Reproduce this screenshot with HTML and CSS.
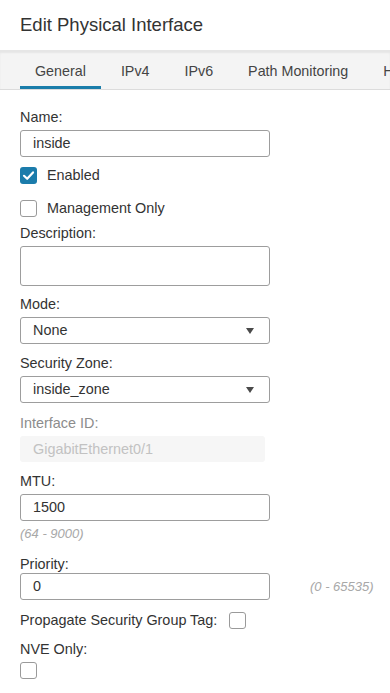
FILE: index.html
```html
<!DOCTYPE html>
<html lang="en">
<head>
<meta charset="utf-8">
<title>Edit Physical Interface</title>
<link rel="stylesheet" href="styles.css">
</head>
<body>
<div class="modal">
  <header class="header">
    <h1 class="title">Edit Physical Interface</h1>
  </header>
  <nav class="tabs">
    <div class="tab active">General</div>
    <div class="tab">IPv4</div>
    <div class="tab">IPv6</div>
    <div class="tab">Path Monitoring</div>
    <div class="tab">Hardware Configuration</div>
  </nav>
  <form class="form">
    <div class="field field-name">
      <label class="label">Name:</label>
      <div class="input">inside</div>
    </div>
    <div class="check-row row-enabled">
      <span class="cb checked">
        <svg viewBox="0 0 17 17" width="17" height="17"><path d="M4 8.8 L7.2 11.8 L13 5.4" fill="none" stroke="#fff" stroke-width="2.2" stroke-linecap="round" stroke-linejoin="round"/></svg>
      </span>
      <span class="check-text">Enabled</span>
    </div>
    <div class="check-row row-mgmt">
      <span class="cb"></span>
      <span class="check-text">Management Only</span>
    </div>
    <div class="field field-desc">
      <label class="label">Description:</label>
      <div class="input textarea"></div>
    </div>
    <div class="field field-mode">
      <label class="label">Mode:</label>
      <div class="input select"><span>None</span><span class="caret"></span></div>
    </div>
    <div class="field field-zone">
      <label class="label">Security Zone:</label>
      <div class="input select"><span>inside_zone</span><span class="caret"></span></div>
    </div>
    <div class="field field-iface">
      <label class="label label-muted">Interface ID:</label>
      <div class="input disabled">GigabitEthernet0/1</div>
    </div>
    <div class="field field-mtu">
      <label class="label">MTU:</label>
      <div class="input">1500</div>
      <div class="hint hint-below">(64 - 9000)</div>
    </div>
    <div class="field field-priority">
      <label class="label label-tight">Priority:</label>
      <div class="inline-row">
        <div class="input">0</div>
        <div class="hint">(0 - 65535)</div>
      </div>
    </div>
    <div class="check-row row-sgt">
      <span class="check-text-left">Propagate Security Group Tag:</span>
      <span class="cb"></span>
    </div>
    <div class="field field-nve">
      <label class="label">NVE Only:</label>
      <span class="cb"></span>
    </div>
  </form>
</div>
</body>
</html>
```
FILE: styles.css
```css
* { box-sizing: border-box; }

html, body {
  margin: 0;
  padding: 0;
  background: #ffffff;
}

body {
  font-family: "Liberation Sans", Arial, sans-serif;
  color: #333333;
  font-size: 14.4px;
  overflow: hidden;
}

.modal {
  width: 390px;
  height: 693px;
  overflow: hidden;
  background: #ffffff;
}

.header {
  height: 50px;
  padding: 1px 20px 0;
}

.title {
  margin: 0;
  font-weight: normal;
  font-size: 18.5px;
  line-height: 48px;
  color: #333333;
}

.tabs {
  display: flex;
  gap: 5px;
  height: 40px;
  padding-left: 20px;
  background: #f4f4f4;
  border-top: 1px solid #e6e6e6;
  border-bottom: 1px solid #dcdcdc;
  box-shadow: inset 0 2px 2px rgba(0, 0, 0, 0.06);
  white-space: nowrap;
  overflow: hidden;
}

.tab {
  flex: none;
  height: 39px;
  padding: 10px 15px 0;
  line-height: 20px;
  font-size: 14.3px;
  color: #444444;
  border-bottom: 4px solid transparent;
}

.tab.active {
  border-bottom-color: #1a7daa;
}

.form {
  padding: 18px 20px 0;
}

.label {
  display: block;
  line-height: 18px;
  margin-bottom: 4px;
  color: #333333;
}

.label-muted {
  color: #8c8c8c;
}

.label-tight {
  margin-bottom: 0;
}

.input {
  flex: none;
  width: 250px;
  height: 27px;
  border: 1px solid #9d9d9d;
  border-radius: 3px;
  padding: 0 12px;
  line-height: 25px;
  color: #333333;
  background: #ffffff;
}

.textarea {
  height: 40px;
}

.select {
  display: flex;
  align-items: center;
  justify-content: space-between;
  padding-right: 15px;
}

.caret {
  width: 0;
  height: 0;
  border-left: 4px solid transparent;
  border-right: 4px solid transparent;
  border-top: 6px solid #4a4a4a;
}

.disabled {
  width: 245px;
  height: 26px;
  border: none;
  background: #f6f6f6;
  color: #c2c2c2;
  padding-left: 13px;
  line-height: 26px;
}

.check-row {
  display: flex;
  align-items: center;
  height: 20px;
}

.cb {
  display: block;
  flex: none;
  width: 17px;
  height: 17px;
  border: 1px solid #9a9a9a;
  border-radius: 3px;
  background: #ffffff;
}

.cb.checked {
  border: none;
  background: #1b7cab;
}

.cb svg {
  display: block;
}

.check-text {
  margin-left: 10px;
  color: #333333;
}

.check-text-left {
  margin-right: 12px;
  color: #333333;
}

.row-enabled { margin-top: 8px; }
.row-mgmt { margin-top: 13px; }
.field-desc { margin-top: 6px; }
.field-mode { margin-top: 9px; }
.field-zone { margin-top: 10px; }
.field-iface { margin-top: 11px; }
.field-mtu { margin-top: 10px; }
.field-priority { margin-top: 14px; }
.row-sgt { margin-top: 10px; }
.field-nve { margin-top: 10px; }

.hint {
  font-size: 13px;
  font-style: italic;
  color: #a8a8a8;
  line-height: 14px;
  white-space: nowrap;
}

.hint-below {
  margin-top: 6px;
}

.inline-row {
  display: flex;
  align-items: center;
  gap: 40px;
}
```
